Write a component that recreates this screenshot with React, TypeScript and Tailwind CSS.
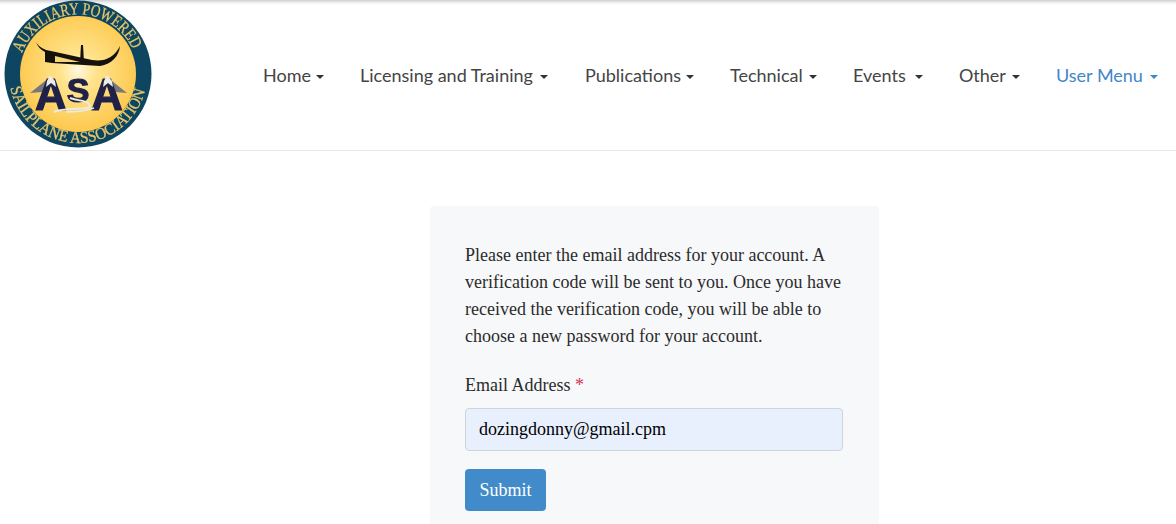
const navItems = [
  { label: 'Home', width: 'w-[97px]', gap: 'ml-[5px]' },
  { label: 'Licensing and Training', width: 'w-[225px]', gap: 'ml-[7px]' },
  { label: 'Publications', width: 'w-[145px]', gap: 'ml-[5px]' },
  { label: 'Technical', width: 'w-[123px]', gap: 'ml-[6px]' },
  { label: 'Events', width: 'w-[106px]', gap: 'ml-[9px]' },
  { label: 'Other', width: 'w-[97px]', gap: 'ml-[6px]' },
];

function Caret({ className }: { className: string }) {
  return <span className={`inline-block w-0 h-0 translate-y-[2px] border-x-4 border-x-transparent border-t-4 ${className}`} />;
}

function Logo() {
  return (
    <svg width="150" height="150" viewBox="0 0 150 150" className="shrink-0 blur-[0.4px]">
      <defs>
        <radialGradient id="sky" cx="50%" cy="47%" r="52%">
          <stop offset="0%" stopColor="#fff8e0" />
          <stop offset="30%" stopColor="#ffe38c" />
          <stop offset="100%" stopColor="#fdc94f" />
        </radialGradient>
        <path id="arcTop" d="M 18 53 A 60 60 0 0 1 129 50" />
        <path id="arcBottom" d="M 6.4 87.8 A 69 69 0 0 0 141.6 87.8" />
      </defs>
      <circle cx="74" cy="74" r="73.5" fill="#0e4560" />
      <circle cx="74" cy="74" r="58" fill="url(#sky)" />
      <text fontFamily="'Liberation Serif', serif" fontSize="17" fill="#e3c66c" stroke="#e3c66c" strokeWidth="0.3">
        <textPath href="#arcTop" textLength="141" lengthAdjust="spacingAndGlyphs">AUXILIARY POWERED</textPath>
      </text>
      <text fontFamily="'Liberation Serif', serif" fontSize="16.5" fill="#e3c66c" stroke="#e3c66c" strokeWidth="0.3">
        <textPath href="#arcBottom" textLength="186" lengthAdjust="spacingAndGlyphs">SAILPLANE ASSOCIATION</textPath>
      </text>
      {/* glider */}
      <path d="M32 42 C35 47 40 50 47 51 L88 60 C100 62 110 58 116 46 C115 56 108 64 96 66 L48 63 L41 62 L41 52 C37 50 34 47 32 42 Z" fill="#15110c" />
      <path d="M77 45 L79 45 L80 62 L76 62 Z" fill="#15110c" />
      <path d="M51 56 L76 62 L51 62 Z" fill="#f6d578" />
      {/* mountains behind the letters */}
      <path d="M26 93 L46 77 L50 84 L38 92 Z M123 93 L103 77 L99 84 L111 92 Z" fill="#77777c" />
      <text fontFamily="'Liberation Sans', sans-serif" fontWeight="700" fill="#1f2148" stroke="#1f2148" strokeWidth="1.2" textAnchor="middle">
        <tspan x="47" y="110" fontSize="44">A</tspan>
        <tspan x="74" y="102" fontSize="34">S</tspan>
        <tspan x="103" y="110" fontSize="44">A</tspan>
      </text>
      {/* snow caps */}
      <path d="M46 75 L51 81 L52 87 L47 83 L42 87 L43 81 Z M103 75 L108 81 L109 87 L104 83 L99 87 L100 81 Z" fill="#ecebe6" />
      {/* river */}
      <path d="M50 112 C62 106 94 112 84 103 C80 100 74 101 66 98" fill="none" stroke="#ecebe6" strokeWidth="2" />
      <path d="M62 112 C72 112 84 110 90 108" fill="none" stroke="#ecebe6" strokeWidth="1.5" />
    </svg>
  );
}

export default function App() {
  return (
    <div className="w-[1176px] h-[524px] overflow-hidden bg-white font-['Liberation_Serif',serif]">
      {/* ===== HEADER ===== */}
      <header className="h-[151px] pl-1 flex items-start border-b border-[#e7e7e7] bg-[linear-gradient(#cfcfcf,#f4f4f4_3px,#ffffff_5px)]">
        <Logo />
        <nav className="ml-[109px] mt-[65px] flex items-center font-['Lato',sans-serif] text-[18px] leading-5 text-[#444444]">
          {navItems.map((item) => (
            <a key={item.label} className={`${item.width} shrink-0 whitespace-nowrap flex items-center`}>
              {item.label}
              <Caret className={`${item.gap} border-t-[#333]`} />
            </a>
          ))}
          <a className="shrink-0 whitespace-nowrap flex items-center text-[#3f87c9]">
            User Menu
            <Caret className="ml-[7px] border-t-[#3f87c9]" />
          </a>
        </nav>
      </header>

      {/* ===== FORM CARD ===== */}
      <main className="pt-[55px] pl-[430px]">
        <section className="w-[449px] h-[340px] px-[35px] pt-[36px] bg-[#f7f8fa] rounded text-[#2b2b2b]">
          <p className="text-[18px] leading-[27px]">
            Please enter the email address for your account. A verification code will be sent to you. Once you have
            received the verification code, you will be able to choose a new password for your account.
          </p>
          <label className="block mt-[22px] text-[18px] leading-[27px]">
            Email Address <span className="text-[#d9304f]">*</span>
          </label>
          <input
            readOnly
            value="dozingdonny@gmail.cpm"
            className="block w-[378px] h-[43px] mt-[9px] px-[13px] bg-[#e8f0fe] border border-[#ced4da] rounded text-[18px] text-black outline-none"
          />
          <button className="block w-[81px] h-[42px] mt-[18px] bg-[#428bca] text-white text-[18px] rounded">
            Submit
          </button>
        </section>
      </main>
    </div>
  );
}
